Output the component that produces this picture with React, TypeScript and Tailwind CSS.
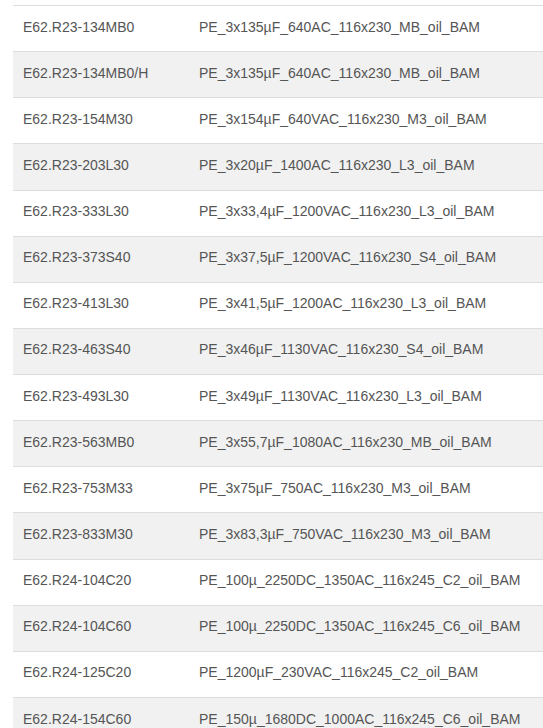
const rows: [string, string][] = [
  ['E62.R23-134MB0', 'PE_3x135µF_640AC_116x230_MB_oil_BAM'],
  ['E62.R23-134MB0/H', 'PE_3x135µF_640AC_116x230_MB_oil_BAM'],
  ['E62.R23-154M30', 'PE_3x154µF_640VAC_116x230_M3_oil_BAM'],
  ['E62.R23-203L30', 'PE_3x20µF_1400AC_116x230_L3_oil_BAM'],
  ['E62.R23-333L30', 'PE_3x33,4µF_1200VAC_116x230_L3_oil_BAM'],
  ['E62.R23-373S40', 'PE_3x37,5µF_1200VAC_116x230_S4_oil_BAM'],
  ['E62.R23-413L30', 'PE_3x41,5µF_1200AC_116x230_L3_oil_BAM'],
  ['E62.R23-463S40', 'PE_3x46µF_1130VAC_116x230_S4_oil_BAM'],
  ['E62.R23-493L30', 'PE_3x49µF_1130VAC_116x230_L3_oil_BAM'],
  ['E62.R23-563MB0', 'PE_3x55,7µF_1080AC_116x230_MB_oil_BAM'],
  ['E62.R23-753M33', 'PE_3x75µF_750AC_116x230_M3_oil_BAM'],
  ['E62.R23-833M30', 'PE_3x83,3µF_750VAC_116x230_M3_oil_BAM'],
  ['E62.R24-104C20', 'PE_100µ_2250DC_1350AC_116x245_C2_oil_BAM'],
  ['E62.R24-104C60', 'PE_100µ_2250DC_1350AC_116x245_C6_oil_BAM'],
  ['E62.R24-125C20', 'PE_1200µF_230VAC_116x245_C2_oil_BAM'],
  ['E62.R24-154C60', 'PE_150µ_1680DC_1000AC_116x245_C6_oil_BAM'],
];

export default function App() {
  return (
    <div className="h-[728px] overflow-hidden bg-white pt-[5px] pl-[13px] font-['Liberation_Sans',Arial,sans-serif] text-[14px] text-[#555555]">
      <table className="w-[530px] table-fixed border-collapse">
        <colgroup>
          <col className="w-[176px]" />
          <col />
        </colgroup>
        <tbody>
          {rows.map(([code, name], i) => (
            <tr key={code} className={i % 2 === 1 ? 'bg-[#f1f1f1]' : 'bg-white'}>
              <td className="h-[46.13px] border-t border-[#dddddd] px-[10px] pb-[4px] align-middle leading-[20px]">
                {code}
              </td>
              <td className="h-[46.13px] border-t border-[#dddddd] px-[10px] pb-[4px] align-middle leading-[20px] whitespace-nowrap">
                {name}
              </td>
            </tr>
          ))}
        </tbody>
      </table>
    </div>
  );
}
